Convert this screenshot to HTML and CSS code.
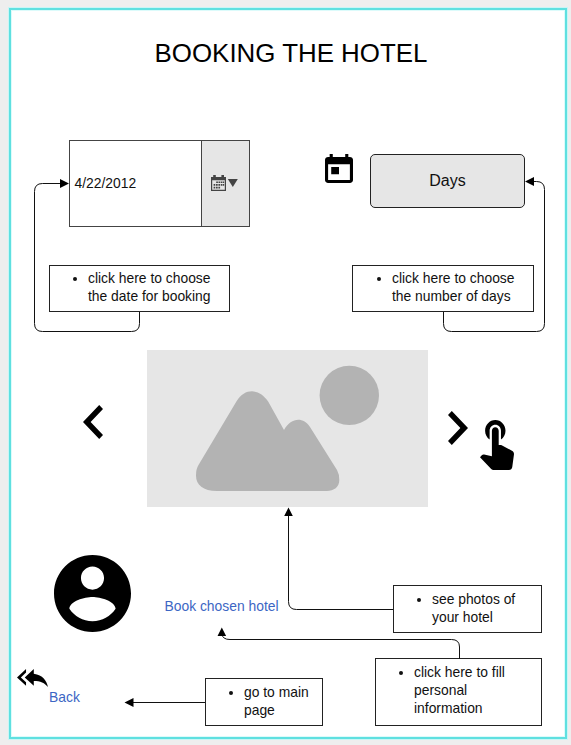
FILE: index.html
```html
<!DOCTYPE html>
<html lang="en">
<head>
<meta charset="utf-8">
<title>Booking the hotel</title>
<link rel="stylesheet" href="styles.css">
</head>
<body>
<main class="board">
  <h1 class="title">BOOKING THE HOTEL</h1>

  <section class="row controls">
    <div class="date">
      <span class="date-value">4/22/2012</span>
      <span class="date-button">
        <svg class="date-icon" viewBox="0 0 27 17">
          <g fill="#444">
            <path fill-rule="evenodd" d="M0 3h15v14H0zM1.2 6.2v9.6h12.6V6.2z"/>
            <path d="M2.2 1h2.6v3H2.2zM10.4 1H13v3h-2.6z"/>
            <path d="M5.2 7.4h1.7v1.7H5.2zM7.5 7.4h1.7v1.7H7.5zM9.8 7.4h1.7v1.7H9.8zM12 7.4h1.2v1.7H12zM2.6 10h1.7v1.7H2.6zM5 10h1.7v1.7H5zM7.4 10h1.7v1.7H7.4zM9.8 10h1.7v1.7H9.8zM12 10h1.2v1.7H12zM2.6 12.7h1.7v1.7H2.6zM5 12.7h1.7v1.7H5zM7.4 12.7h1.7v1.7H7.4z"/>
            <path d="M16.8 5h10l-5 8z"/>
          </g>
        </svg>
      </span>
    </div>
    <svg class="today" viewBox="3 1 18 20" preserveAspectRatio="none"><path d="M19 3h-1V1h-2v2H8V1H6v2H5c-1.11 0-1.99.9-1.99 2L3 19c0 1.1.89 2 2 2h14c1.1 0 2-.9 2-2V5c0-1.1-.9-2-2-2zm0 16H5V8h14v11zM7 10h5v5H7z"/></svg>
    <div class="days">Days</div>
  </section>

  <section class="row hints">
    <ul class="note note-date"><li>click here to choose<br>the date for booking</li></ul>
    <ul class="note note-days"><li>click here to choose<br>the number of days</li></ul>
  </section>

  <section class="row gallery">
    <svg class="chevron prev" viewBox="8 6 7.41 12" preserveAspectRatio="none"><path d="M15.41 7.41L14 6l-6 6 6 6 1.41-1.41L10.83 12z"/></svg>
    <svg class="photo" viewBox="147 350 281 157">
      <path fill="#e6e6e6" d="M147 350h281v157H147z"/>
      <g fill="#b3b3b3">
        <circle cx="349.3" cy="395.4" r="29.7"/>
        <path d="M236.7 401C245 388 259 388 268.300 401.700L284 430C291 417.500 303 416.500 310 427L337 470Q339.300 474 339.300 480C339.300 487 334 491 326.700 491H217C203 491 196 485 196 475.500Q196 469 198.500 465Z"/>
      </g>
    </svg>
    <svg class="chevron next" viewBox="8.59 6 7.41 12" preserveAspectRatio="none"><path d="M10 6L8.59 7.41 13.17 12l-4.58 4.59L10 18l6-6z"/></svg>
    <svg class="touch" viewBox="4.75 3 15 21" preserveAspectRatio="none"><path d="M9 11.24V7.5C9 6.12 10.12 5 11.5 5S14 6.12 14 7.500v3.740c1.210-.81 2-2.180 2-3.740C16 5.010 13.990 3 11.500 3S7 5.010 7 7.500c0 1.560.79 2.930 2 3.740zm9.840 4.630l-4.540-2.260c-.17-.07-.35-.11-.54-.11H13v-6c0-.83-.67-1.500-1.500-1.500S10 6.670 10 7.500v10.740l-3.430-.72c-.08-.01-.15-.03-.24-.03-.31 0-.59.13-.79.33l-.79.8 4.940 4.940c.27.27.65.44 1.060.44h6.790c.75 0 1.330-.55 1.440-1.280l.75-5.270c.01-.07.02-.14.02-.2 0-.62-.38-1.160-.91-1.380z"/></svg>
  </section>

  <section class="row booking">
    <svg class="account" viewBox="2 2 20 20"><path d="M12 2C6.480 2 2 6.480 2 12s4.480 10 10 10 10-4.480 10-10S17.520 2 12 2zm0 3c1.660 0 3 1.340 3 3s-1.340 3-3 3-3-1.340-3-3 1.340-3 3-3zm0 14.200c-2.500 0-4.710-1.280-6-3.220.03-1.990 4-3.080 6-3.080 1.990 0 5.970 1.090 6 3.080-1.290 1.940-3.500 3.220-6 3.220z"/></svg>
    <a class="link book">Book chosen hotel</a>
    <ul class="note note-photos"><li>see photos of<br>your hotel</li></ul>
  </section>

  <section class="row footer">
    <svg class="reply" viewBox="0 5 24 15" preserveAspectRatio="none"><path d="M7 8V5l-7 7 7 7v-3l-4-4 4-4zm6 1V5l-7 7 7 7v-4.100c5 0 8.500 1.600 11 5.100-1-5-4-10-11-11z"/></svg>
    <a class="link back">Back</a>
    <ul class="note note-main"><li>go to main<br>page</li></ul>
    <ul class="note note-fill"><li>click here to fill<br>personal<br>information</li></ul>
  </section>

  <svg class="connectors" viewBox="11 10 554 727">
    <g fill="none" stroke="#111">
      <path d="M139.500 312V323.500Q139.500 331.500 131.500 331.500H42.500Q34.500 331.500 34.500 323.500V191.500Q34.500 183.500 42.500 183.500H62"/>
      <path d="M443.500 312V323.500Q443.500 331.500 451.500 331.500H536.500Q544.500 331.500 544.500 323.500V189.500Q544.500 181.500 536.500 181.500H532"/>
      <path d="M393 609.500H296.500Q288.500 609.500 288.500 601.500V514"/>
      <path d="M459.500 659V647Q459.500 639.500 451.500 639.500H230Q222.500 639.500 222 634"/>
      <path d="M205 702.500H132"/>
    </g>
    <path d="M69 183.500l-9-4.500v9zM525 181.500l9-4.500v9zM288.500 507.500l-4.300 8.500h8.600zM221.800 627.500l-4.300 8.500h8.600zM124.500 702.500l9-4.500v9z"/>
  </svg>
</main>
</body>
</html>
```
FILE: styles.css
```css
* {
  box-sizing: border-box;
}

body {
  margin: 0;
  padding: 8px 0 0 9px;
  height: 745px;
  overflow: hidden;
  background: #eee;
  color: #111;
  font: 13.87px/18px "Liberation Sans", Arial, sans-serif;
}

.board {
  position: relative;
  display: grid;
  grid-template-rows: 130px 125px 85px 205px 103px 68px;
  width: 558px;
  height: 731px;
  border: 2px solid #5fe0e0;
  background: #fff;
  box-shadow: 0 0 0 1px #c8f6f6, inset 0 0 0 1px #dcfbfb;
}

.title {
  margin: 28px 0 0 6px;
  font-size: 25.9px;
  line-height: 30px;
  font-weight: 400;
  text-align: center;
  color: #000;
}

.row {
  display: flex;
  align-items: flex-start;
}

.row > * {
  flex: none;
}

.date {
  display: flex;
  width: 181px;
  height: 87px;
  margin-left: 58px;
  border: 1px solid #444;
}

.date-value {
  flex: 1;
  padding-left: 4.5px;
  line-height: 84px;
}

.date-button {
  display: flex;
  align-items: center;
  width: 48px;
  padding: 0 0 2px 9px;
  border-left: 1px solid #444;
  background: #e6e6e6;
}

.date-icon {
  width: 27px;
  height: 17px;
}

.today {
  width: 28px;
  height: 29px;
  margin: 14px 0 0 75px;
}

.days {
  width: 155px;
  height: 54px;
  margin: 14px 0 0 17px;
  border: 1px solid #222;
  border-radius: 5px;
  background: #e6e6e6;
  font-size: 16px;
  line-height: 52px;
  text-align: center;
}

.note {
  margin: 0;
  padding: 3px 0 0 38px;
  border: 1px solid #222;
  background: #fff;
  height: 47px;
}

.note-date {
  width: 181px;
  margin-left: 38px;
}

.note-days {
  width: 182px;
  margin-left: 122px;
  padding-left: 39px;
}

.chevron {
  width: 20px;
  height: 34px;
}

.prev {
  margin: 55px 0 0 72px;
}

.photo {
  width: 281px;
  height: 157px;
  margin-left: 44px;
}

.next {
  margin: 61px 0 0 20px;
}

.touch {
  width: 34px;
  height: 50px;
  margin: 70px 0 0 12px;
}

.account {
  width: 77px;
  height: 77px;
  margin-left: 43px;
}

.link {
  color: #3c66c4;
}

.book {
  width: 115px;
  margin: 42px 0 0 33.5px;
  white-space: nowrap;
}

.note-photos {
  width: 149px;
  height: 48px;
  margin: 30px 0 0 113.5px;
  padding-top: 4px;
}

.reply {
  width: 31px;
  height: 18px;
  margin: 11px 0 0 6px;
}

.back {
  width: 31px;
  margin: 30px 0 0 1px;
}

.note-main {
  width: 118px;
  height: 48px;
  margin: 20px 0 0 125px;
  padding-top: 4px;
}

.note-fill {
  width: 167px;
  height: 68px;
  margin-left: 52px;
  padding-top: 4px;
}

.connectors {
  position: absolute;
  left: 0;
  top: 0;
  width: 554px;
  height: 727px;
  pointer-events: none;
}
```
